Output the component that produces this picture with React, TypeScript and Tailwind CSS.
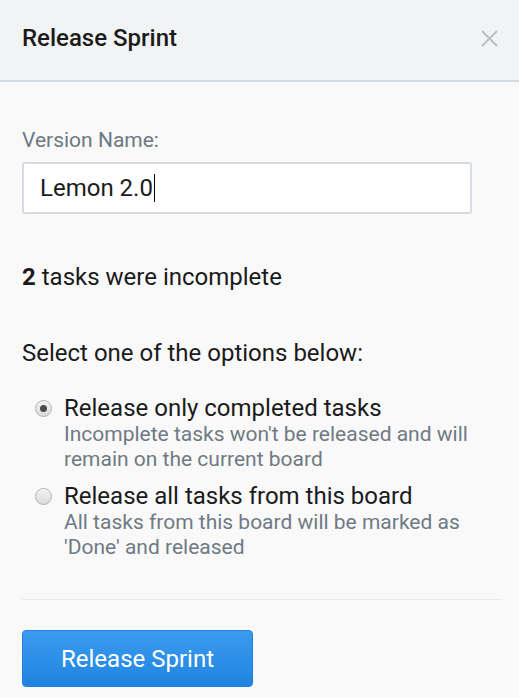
import React from "react";

const options = [
  {
    title: "Release only completed tasks",
    desc: "Incomplete tasks won't be released and will remain on the current board",
    checked: true,
  },
  {
    title: "Release all tasks from this board",
    desc: "All tasks from this board will be marked as 'Done' and released",
    checked: false,
  },
];

const Radio: React.FC<{ checked: boolean }> = ({ checked }) => (
  <span className="mt-[6px] flex h-[17px] w-[17px] shrink-0 items-center justify-center rounded-full border border-[#b4b4b4] bg-gradient-to-b from-[#f4f4f4] to-[#d9d9d9]">
    {checked && <span className="h-[7px] w-[7px] rounded-full bg-[#4a4a4a]" />}
  </span>
);

export default function App() {
  return (
    <div className="min-h-[698px] w-[519px] bg-[#f9f9fa] font-['Roboto',sans-serif] text-[#1b1b1b]">
      {/* header */}
      <div className="flex h-[82px] items-center justify-between border-b-2 border-[#d4dbe0] bg-[#f2f3f5] pl-[22px] pr-[21px]">
        <h1 className="pb-[4px] text-[24px] leading-[32px] font-medium">Release Sprint</h1>
        <svg width="17" height="17" viewBox="0 0 17 17" className="mb-[4px]">
          <path d="M1 1L16 16M16 1L1 16" stroke="#b9c1c7" strokeWidth="2" />
        </svg>
      </div>

      <div className="px-[22px] pt-[46px]">
        <div className="text-[21px] leading-[24px] text-[#6d7881]">Version Name:</div>
        <div className="mt-[10px] flex h-[52px] w-[450px] items-center rounded-[3px] border-2 border-[#d6dce1] bg-white pl-[16px] text-[24px]">
          <span>Lemon 2.0</span>
          <span className="ml-[1px] h-[28px] w-[1px] bg-black" />
        </div>

        <p className="mt-[49px] text-[24px] leading-[28px]">
          <b className="font-bold">2</b> tasks were incomplete
        </p>

        <p className="mt-[48px] text-[24px] leading-[28px]">Select one of the options below:</p>

        <div className="mt-[27px] flex flex-col gap-[10px] pl-[13px]">
          {options.map((o) => (
            <label key={o.title} className="flex gap-[12px]">
              <Radio checked={o.checked} />
              <div className="w-[432px]">
                <div className="text-[24px] leading-[28px]">{o.title}</div>
                <div className="text-[21px] leading-[25px] text-[#6f7a84]">{o.desc}</div>
              </div>
            </label>
          ))}
        </div>

        <div className="mt-[39px] h-px w-[479px] bg-[#e7eaec]" />

        <button className="mt-[30px] h-[57px] w-[231px] rounded-[4px] border border-[#2280dc] bg-gradient-to-b from-[#3a9bef] to-[#1f84e0] text-[24px] text-white">
          Release Sprint
        </button>
      </div>
    </div>
  );
}
